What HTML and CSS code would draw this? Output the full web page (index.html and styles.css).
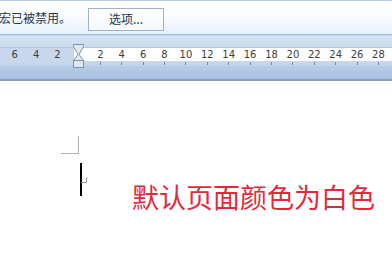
FILE: index.html
```html
<!DOCTYPE html>
<html lang="zh">
<head>
<meta charset="utf-8">
<link rel="stylesheet" href="styles.css">
</head>
<body>
<div class="msgbar">
  <span class="msgtext">宏已被禁用。</span>
  <button class="optbtn">选项...</button>
</div>
<div class="rulerband">
  <div class="rulertop"></div>
  <div class="ruler">
    <div class="grayzone">
      <span class="cell">6</span><span class="cell">4</span><span class="cell">2</span>
    </div>
    <div class="zero">
      <svg class="marker" width="12" height="25" viewBox="0 0 12 25">
        <path d="M0.5 0.5 H10.5 V2.5 L6 10.5 L10.5 16.5 H0.5 L5 10.5 L0.5 2.5 Z" fill="#dfe7f1" stroke="#7f93ad"/>
        <rect x="0.5" y="16.5" width="10" height="7" fill="#dfe7f1" stroke="#7f93ad"/>
      </svg>
    </div>
    <div class="whitezone">
      <span class="cell">2</span><span class="cell">4</span><span class="cell">6</span><span class="cell">8</span><span class="cell">10</span><span class="cell">12</span><span class="cell">14</span><span class="cell">16</span><span class="cell">18</span><span class="cell">20</span><span class="cell">22</span><span class="cell">24</span><span class="cell">26</span><span class="cell">28</span>
    </div>
  </div>
  <div class="ticks">
    <span class="tcell"></span><span class="tcell"></span><span class="tcell"></span><span class="tcell"></span><span class="tcell"></span><span class="tcell"></span><span class="tcell"></span><span class="tcell"></span><span class="tcell"></span><span class="tcell"></span><span class="tcell"></span><span class="tcell"></span><span class="tcell"></span><span class="tcell"></span>
  </div>
</div>
<div class="page">
  <div class="corner"></div>
  <div class="line">
    <div class="caret">
      <svg class="ctt" width="7" height="7" viewBox="0 0 7 7">
        <path d="M0 5.5 H5.5 V1 M5.5 1 H6.5" fill="none" stroke="#9a9a9a" stroke-width="1"/>
      </svg>
    </div>
    <div class="redtext">默认页面颜色为白色</div>
  </div>
</div>
</body>
</html>
```

FILE: styles.css
```css
html, body {
  margin: 0;
  padding: 0;
  background: #ffffff;
}
body {
  width: 392px;
  height: 275px;
  overflow: hidden;
  font-family: "Noto Sans CJK SC", "DejaVu Sans", sans-serif;
}
.msgbar {
  box-sizing: border-box;
  height: 35px;
  border-top: 1px solid #b3cbe6;
  border-bottom: 1px solid #a3bddf;
  background: linear-gradient(#ffffff, #fbfdff 40%, #e6f0fb);
  display: flex;
  align-items: center;
}
.msgtext {
  font-size: 12px;
  color: #1c3553;
  margin-left: -1px;
  line-height: 14px;
}
.optbtn {
  margin-left: 17px;
  margin-top: 3px;
  width: 76px;
  height: 23px;
  box-sizing: border-box;
  border: 1px solid #9fb2c9;
  background: linear-gradient(#ffffff, #f6f9fd);
  font-family: "Noto Sans CJK SC", sans-serif;
  font-size: 12px;
  color: #1c3553;
  padding: 0;
  line-height: 14px;
}
.rulerband {
  height: 44px;
  border-bottom: 2px solid #8e9caf;
  background: linear-gradient(#d7e4f4, #c9daee 30%, #b6cbe6 70%, #a9c1e1);
  display: flex;
  flex-direction: column;
}
.rulertop {
  height: 11px;
  border-top: 1px solid #c3d4ea;
  border-bottom: 1px solid #b4c8e2;
}
.ruler {
  height: 13px;
  display: flex;
  font-family: "DejaVu Sans", sans-serif;
  font-size: 10px;
  color: #3d3d3d;
}
.grayzone {
  width: 74px;
  background: #c8d7eb;
  display: flex;
  padding-left: 4px;
  box-sizing: border-box;
}
.cell {
  width: 21.4px;
  flex: none;
  text-align: center;
  line-height: 13px;
}
.zero {
  width: 10px;
  position: relative;
  background: #ffffff;
}
.marker {
  position: absolute;
  left: -1px;
  top: -4px;
}
.whitezone {
  flex: 1;
  background: #ffffff;
  display: flex;
  padding-left: 5.7px;
}
.ticks {
  height: 5px;
  display: flex;
  padding-left: 89.7px;
  background: linear-gradient(#c9d9ed, #c0d3ea);
}
.tcell {
  width: 21.4px;
  flex: none;
}
.tcell::after {
  content: "";
  display: block;
  width: 1px;
  height: 3px;
  margin: 1px auto 0;
  background: #7f8794;
}
.page {
  display: flex;
  flex-direction: column;
}
.corner {
  margin-left: 61px;
  margin-top: 55px;
  width: 18px;
  height: 18px;
  box-sizing: border-box;
  border-right: 1px solid #b4b4b4;
  border-bottom: 1px solid #b4b4b4;
}
.line {
  display: flex;
  align-items: flex-start;
  margin-top: 9px;
}
.caret {
  margin-left: 80px;
  width: 2px;
  height: 33px;
  background: #000000;
  position: relative;
}
.ctt {
  position: absolute;
  left: 1px;
  top: 14px;
}
.redtext {
  margin-left: 50px;
  margin-top: 16px;
  font-size: 27px;
  line-height: 36px;
  color: #e5283a;
  white-space: nowrap;
}
```
